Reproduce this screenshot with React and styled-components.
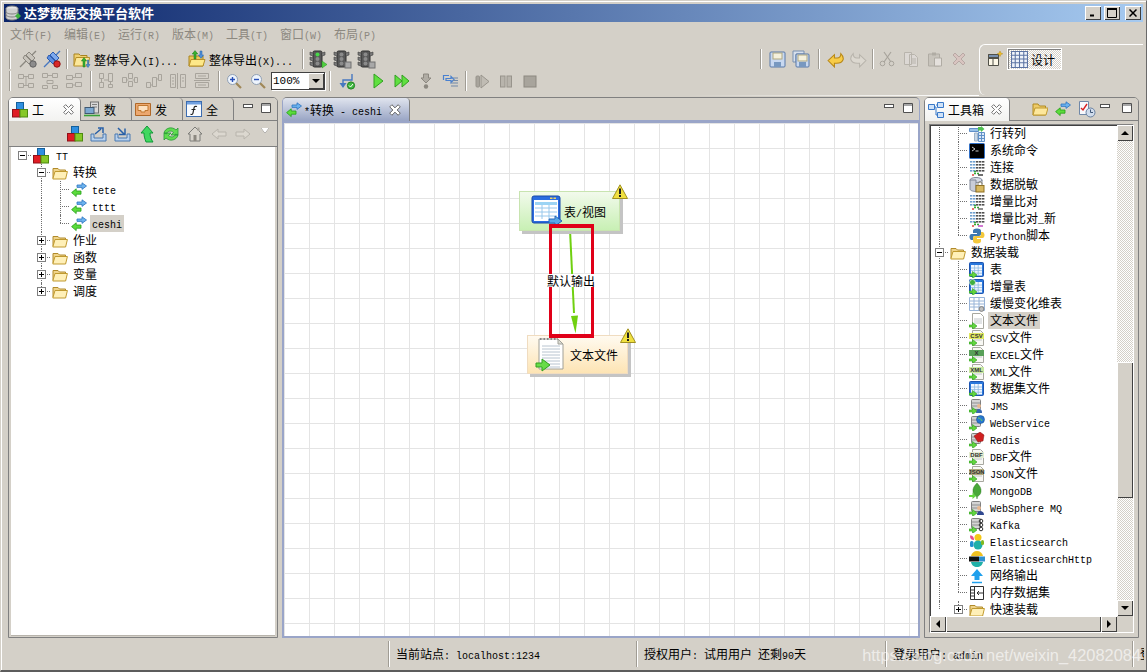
import React from 'react';
import styled, { createGlobalStyle } from 'styled-components';

const GlobalStyle = createGlobalStyle`
  html, body { margin: 0; padding: 0; background: #d4d0c8; }
  body { font-family: "Noto Sans CJK SC", "Liberation Sans", sans-serif; font-size: 12px; color: #000; }
`;

/* ---------- icons ---------- */
const Svg = ({ s = 16, w, h, vb = '0 0 16 16', children }) => (
  <svg width={w || s} height={h || s} viewBox={vb} style={{ display: 'block', flex: 'none' }}>{children}</svg>
);
const G1 = '#a8a49c';
const G2 = '#8c8880';
const GreenTag = () => <path d="M0 12h3.500V9.500L8 13l-4.500 3.500V14H0z" fill="#62d63e" stroke="#2c9a20" strokeWidth=".6" />;

const Cube = ({ s }) => (
  <Svg s={s}>
    <rect x="4.500" y="0.500" width="7" height="8" fill="#2f8fe0" stroke="#14609c" />
    <rect x="0.500" y="7.500" width="7.500" height="7.500" fill="#e01c24" stroke="#901018" />
    <rect x="8" y="7.500" width="7.500" height="7.500" fill="#86c828" stroke="#4c8a10" />
  </Svg>
);
const Folder = () => (
  <Svg>
    <path d="M1 13V3.500h5l1.500 1.500h6V13z" fill="#f0d48a" stroke="#b08a2a" />
    <path d="M.8 14 3 6.500h12.400L13.600 14z" fill="#fff0b8" stroke="#c09a30" />
  </Svg>
);
const Trans = ({ s }) => (
  <Svg s={s}>
    <path d="M6 3h5V.8L15.500 4 11 7.400V5.400H6z" fill="#6cb2ee" stroke="#2c74c0" strokeWidth=".8" />
    <path d="M10 9H5.200V6.800L.6 10.600 5.200 14.600v-2.400H10z" fill="#5cdc3c" stroke="#24a018" strokeWidth=".8" />
  </Svg>
);
const WindowTable = ({ s, children }) => (
  <Svg s={s}>
    <rect x=".5" y=".5" width="14" height="14" rx="1" fill="#2a78dc" stroke="#1c54b0" />
    <rect x="2" y="3" width="11" height="10.500" fill="#f4f8ff" />
    <path d="M2 6h11M2 8.600h11M2 11.200h11M5.600 3v10.500M9.200 3v10.500" stroke="#8cb8e0" strokeWidth=".8" />
    {children}
  </Svg>
);
const GridTable = () => (
  <Svg>
    <path d="M.5 1.500h15v13H.5z" fill="#fff" stroke="#98b4d8" />
    <path d="M.5 5h15M.5 8h15M.5 11h15M5 1.500v13M10 1.500v13" stroke="#98b4d8" />
    <circle cx="12.500" cy="13" r="2.400" fill="#c0c0c0" stroke="#808080" />
  </Svg>
);
const Doc = ({ label, fill = '#fff', s = 16, children }) => (
  <Svg s={s}>
    <path d="M3.500.5h8l3 3v12h-11z" fill={fill === '#fff' ? '#fff' : '#f8f8f4'} stroke="#a8a8a0" />
    <path d="M5 6h8M5 8h8M5 10h8" stroke="#c4c8cc" />
    {label && <rect x="0" y="3" width="15" height="6" fill={fill} />}
    {label && <text x="7.500" y="8.300" fontSize="6" fontWeight="bold" textAnchor="middle" fontFamily="Liberation Sans" fill="#303030">{label}</text>}
    {children}
  </Svg>
);
const Dots = ({ tint }) => (
  <Svg>
    {[0, 1, 2, 3].map((r) => [1, 4, 7, 10, 13].map((c, i) => (
      <rect key={`${r}${c}`} x={c} y={1 + r * 3} width="2.400" height="1.600" fill={i < 2 ? '#70a0d0' : '#505050'} />
    )))}
    <path d="M5 13.500h2M8 13.500h2M5 11.500h2" stroke="#38a838" strokeWidth="1.400" />
    <path d="M9 15h5" stroke={tint} strokeWidth="1.400" />
    <path d="M3 15h2" stroke="#e04040" strokeWidth="1.400" />
  </Svg>
);
const Server = ({ children }) => (
  <Svg>
    <rect x="2.500" y="1.500" width="9" height="10" rx="1" fill="#d4d4d4" stroke="#808080" />
    <path d="M3 5h8M3 8h8" stroke="#909090" />
    {children}
    <GreenTag />
  </Svg>
);

const Plug = ({ off }) => (
  <Svg s={20} vb="0 0 20 20">
    <path d="M2 18 8 12M12 8 18 2" stroke={off ? G2 : '#4878c0'} strokeWidth="1.400" />
    <path d="m7 6 7 7-3 2-6-6z" fill={off ? '#c8c4bc' : '#5c8ee0'} stroke={off ? G2 : '#2c5cb0'} />
    <path d="m11 3 6 6-3 3-6-6z" fill={off ? '#c8c4bc' : '#7ca8ec'} stroke={off ? G2 : '#2c5cb0'} />
    <circle cx="15" cy="15" r="3.200" fill={off ? '#8c8c8c' : '#d82828'} stroke={off ? '#606060' : '#901010'} />
  </Svg>
);
const FolderIO = () => (
  <Svg s={18} vb="0 0 18 18">
    <path d="M1 15V4h5l1.500 1.500H14V15z" fill="#f0d070" stroke="#a88420" />
    <path d="M.8 16 3 7.500h13.600L15 16z" fill="#fbe79a" stroke="#b89028" />
    <path d="M10 17V11H8.400l2.600-3.500 2.600 3.500H12v6z" fill="#38b030" stroke="#187818" strokeWidth=".5" />
    <path d="M14.400 10v4.500h-1.400l2 3 2-3h-1.400V10z" fill="#5090d8" stroke="#2060a8" strokeWidth=".5" />
  </Svg>
);
const FolderOut = () => (
  <Svg s={18} vb="0 0 18 18">
    <path d="M1 16V6h14v10z" fill="#eec858" stroke="#a88420" />
    <path d="M1 16 3 9.500h14L15 16z" fill="#fde888" stroke="#b89028" />
    <path d="M6 9V4H4.200L7 .6 9.800 4H8v5z" fill="#38b030" stroke="#187818" strokeWidth=".5" />
    <path d="M12 1v4h-1.600L13 8.400 15.600 5H14V1z" fill="#5090d8" stroke="#2060a8" strokeWidth=".5" />
  </Svg>
);
const Light = ({ on, tag }) => (
  <Svg s={20} vb="0 0 20 20">
    <rect x="5" y="2" width="9" height="16" rx="1.500" fill="#585858" stroke="#303030" />
    <path d="M5 4 2 3v3l3 1M5 9 2 8v3l3 1M5 14l-3-1v3l3 1M14 4l3-1v3l-3 1" fill="#787878" stroke="#404040" strokeWidth=".6" />
    <circle cx="9.500" cy="5.500" r="2" fill={on ? '#48d848' : '#8a8a8a'} />
    <circle cx="9.500" cy="10" r="2" fill="#8a8a8a" />
    <circle cx="9.500" cy="14.500" r="2" fill="#8a8a8a" />
    {tag === 'play' && <path d="m14 12 5 3.500-5 3.500z" fill="#50d040" stroke="#289020" strokeWidth=".5" />}
    {tag === 'gray' && <rect x="13" y="13" width="6" height="6" fill="#a8a8a8" stroke="#707070" />}
  </Svg>
);
const Layout = ({ d }) => (
  <Svg s={18} vb="0 0 18 18">
    <path d={d} fill="none" stroke={G1} strokeWidth="1" />
  </Svg>
);
const LAY = {
  a: 'M1.500 2.500h5v4h-5zM11.500 2.500h5v4h-5zM1.500 11.500h5v4h-5zM11.500 11.500h5v4h-5zM6.500 4.500h5M6.500 13.500h5M9 4.500v9',
  b: 'M1.500 1.500h5v4h-5zM11.500 1.500h5v4h-5zM6 8.500h6v3H6zM1.500 13.500h5v3h-5zM11.500 13.500h5v3h-5zM6.500 3.500h5',
  c: 'M1.500 3.500h6v4h-6zM10.500 1.500h6v4h-6zM1.500 11.500h6v4h-6zM10.500 10.500h6v4h-6zM7.500 5.500h3M7.500 13h3',
  d: 'M2.500 1.500h4v5h-4zM11.500 1.500h4v8h-4zM2.500 10.500h4v5h-4zM11.500 12.500h4v3h-4zM4.500 6.500v4M13.500 9.500v3M7 8h4',
  e: 'M1.500 5.500h4v5h-4zM7.500 1.500h4v5h-4zM7.500 9.500h4v5h-4zM13.500 5.500h3v5h-3zM5.500 8h2M11.500 8h2',
  f: 'M1.500 10.500h4v5h-4zM7.500 5.500h4v9h-4zM13.500 2.500h3v6h-3zM5.500 13h2M11.500 7h2',
  g: 'M1.500 2.500h5v13h-5zM11.500 2.500h5v13h-5zM8.500 1v16M3 6h2M3 9h2M3 12h2M13 6h2M13 9h2',
  h: 'M2.500 1.500h13v5h-13zM2.500 10.500h13v5h-13zM1 8.500h16M5 4h8M5 13h8',
};
const Zoom = ({ plus }) => (
  <Svg>
    <path d="m10 10 5 5" stroke="#a08858" strokeWidth="2.200" />
    <circle cx="6.500" cy="6.500" r="5" fill="#eef4fc" stroke="#90a0b4" />
    <path d={plus ? 'M4 6.500h5M6.500 4v5' : 'M4 6.500h5'} stroke="#2850b8" strokeWidth="1.400" />
  </Svg>
);
const Route = () => (
  <Svg s={18} vb="0 0 18 18">
    <path d="M5 15V8h9V2" fill="none" stroke="#4878c0" strokeWidth="1.400" />
    <path d="M1.500 11h7L5 16z" fill="#4878c0" />
    <circle cx="13" cy="13.500" r="3.600" fill="#40b840" stroke="#208020" />
    <path d="m11 13.500 1.500 1.500 2.500-3" fill="none" stroke="#fff" />
  </Svg>
);
const Play = ({ fast }) => (
  <Svg>
    {fast ? (
      <path d="m1 2 7 6-7 6zM8 2l7 6-7 6z" fill="#60e040" stroke="#30a020" />
    ) : (
      <path d="m4 1 9 7-9 7z" fill="#60e040" stroke="#30a020" />
    )}
  </Svg>
);
const Step = () => (
  <Svg>
    <path d="M5.500 1h5v4H13L8 10 3 5h2.500z" fill="#b0aca4" stroke={G2} />
    <circle cx="8" cy="13.500" r="2.200" fill="#8c8880" />
  </Svg>
);
const StepList = () => (
  <Svg s={18} vb="0 0 18 18">
    <path d="M8 3.500H2.500V8M5 6.500h5V4.500l3 3-3 3V8.500H5z" fill="none" stroke="#4880d0" strokeWidth="1.200" />
    <path d="M10 11h7M10 14h7M12 6h5M12 8.500h5" stroke="#7088a8" />
  </Svg>
);
const DebugGray = ({ k }) => (
  <Svg>
    {k === 'resume' && <><rect x="2" y="3" width="3.500" height="11" rx="1" fill="#a8a49c" stroke="#98948c" /><path d="m7 2 8 6.500L7 15z" fill="#c0bcb4" stroke="#98948c" /></>}
    {k === 'pause' && <><rect x="2.500" y="3" width="4.500" height="11" fill="#b8b4ac" stroke="#98948c" /><rect x="9" y="3" width="4.500" height="11" fill="#b8b4ac" stroke="#98948c" /></>}
    {k === 'stop' && <rect x="2" y="3" width="12" height="11" fill="#a8a49c" stroke="#8c8880" />}
  </Svg>
);
const Save = ({ all }) => (
  <Svg s={18} vb="0 0 18 18">
    {all && <path d="M1 1h11v3H4v8H1z" fill="#d8e0ec" stroke="#7890b0" />}
    <rect x={all ? 4 : 2} y={all ? 4 : 2} width={all ? 13 : 15} height={all ? 13 : 15} rx="1" fill="#c8d8f0" stroke="#5878a8" />
    <rect x={all ? 6 : 5} y={all ? 5 : 3} width="9" height="6" fill="#f4f0dc" stroke="#b0a880" />
    <rect x={all ? 7 : 6} y="12" width="7" height="5" fill="#7898c0" />
  </Svg>
);
const Undo = ({ off, flip }) => (
  <Svg s={17} vb="0 0 16 16">
    <path
      transform={flip ? 'translate(16 0) scale(-1 1)' : undefined}
      d="M1 9 7 3.500v3h2.500c2.500 0 3.500-2 3.500-4 2 2 3 3.500 2 6s-3 3-6 3H7v3.500z"
      fill={off ? '#dcd8d0' : '#f8cc48'}
      stroke={off ? '#b8b4ac' : '#b88818'}
    />
  </Svg>
);
const Cut = () => (
  <Svg><path d="M12 1 5 11M5 1l7 10" stroke={G1} strokeWidth="1.200" /><circle cx="3.500" cy="12.500" r="2.300" fill="none" stroke={G1} /><circle cx="12.500" cy="12.500" r="2.300" fill="none" stroke={G1} /></Svg>
);
const Copy = () => (
  <Svg><path d="M1.500 1.500h7v12h-7zM6.500 3.500h5l3 3v9h-8z" fill="#dcd8d4" stroke="#b8b4ac" /><path d="M8 8h5M8 10h5M8 12h5" stroke="#b8b4ac" /></Svg>
);
const Paste = () => (
  <Svg><path d="M1.500 3h11v12h-11z" fill="#c8c4bc" stroke="#b0aca4" /><path d="M5 1.500h4v3H5z" fill="#b0aca4" /><path d="M7.500 7h7v8h-7z" fill="#e4e0dc" stroke="#b0aca4" /></Svg>
);
const Del = () => (
  <Svg><path d="m2 4 2-2 4 4 4-4 2 2-4 4 4 4-2 2-4-4-4 4-2-2 4-4z" fill="#d8c4c0" stroke="#b8a8a4" /></Svg>
);
const NewPersp = () => (
  <Svg><path d="M1.500 3.500h10v11h-10zM1.500 7.500h10M6 7.500v7" fill="#fdf8e8" stroke="#505048" /><path d="M1.500 3.500h10v3h-10z" fill="#7890b0" stroke="#505048" /><path d="m13 0 .8 2 2 .8-2 .8-.8 2-.8-2-2-.8 2-.8z" fill="#f0c020" stroke="#b08010" strokeWidth=".4" /></Svg>
);
const DesignGrid = () => (
  <Svg s={17} vb="0 0 16 16"><path d="M.5.5h15v15H.5z" fill="#f0f4fa" stroke="#5c74a4" /><path d="M.5 4h15M.5 7.500h15M.5 11h15M4 .5v15M8 .5v15M12 .5v15" stroke="#5c74a4" /></Svg>
);
const DbServer = () => (
  <Svg><rect x="6.500" y="1" width="8" height="11" fill="#d8d8d8" stroke="#707070" /><path d="M8 3.500h5M8 6h5" stroke="#808080" /><rect x="1" y="6.500" width="9" height="6" fill="#7ca8d0" stroke="#405870" /><path d="M0 14.500h16" stroke="#38a038" strokeWidth="1.600" /></Svg>
);
const Inbox = () => (
  <Svg><path d="M.5 2.500h15v12H.5z" fill="#eca870" stroke="#b06828" /><path d="M3 4.500h10v5h-3v1.500H6V9.500H3z" fill="#fce0c0" stroke="#c07830" /></Svg>
);
const Fx = () => (
  <Svg><rect x=".5" y=".5" width="15" height="15" fill="#f8fbff" stroke="#3c6cb0" /><rect x="1" y="1" width="14" height="2.500" fill="#70a0e0" /><path d="M11 5.500c-2-.6-2.800.2-3 1.500l-1 5c-.2 1.200-1 1.800-2.500 1.300M5.500 8.500h4" fill="none" stroke="#202020" strokeWidth="1.200" /></Svg>
);
const Toolbox = () => (
  <Svg><path d="M.5 2.500h6v5h-6zM9.500.5h6v5h-6zM9.500 10.500h6v5h-6z" fill="#cfe2f8" stroke="#3878c8" /><path d="M6.500 5H8v8h1.500M8 3h1.500" fill="none" stroke="#3878c8" /></Svg>
);
const XClose = ({ s = 11 }) => (
  <Svg s={s} vb="0 0 10 10">
    <path d="M.6 2.400 2.400.6 5 3.200 7.600.6 9.400 2.400 6.800 5 9.400 7.600 7.600 9.400 5 6.800 2.400 9.400.6 7.600 3.200 5z" fill="#fff" stroke="#606060" strokeWidth=".8" />
  </Svg>
);
const MinBtn = () => <Svg w={11} h={10} vb="0 0 11 10"><rect x=".5" y="1.500" width="9" height="3" fill="#fff" stroke="#505050" /></Svg>;
const MaxBtn = () => <Svg w={11} h={10} vb="0 0 11 10"><path d="M.5.5h9v9h-9z" fill="#fff" stroke="#505050" /><path d="M.5 2h9" stroke="#505050" /></Svg>;
const TaskOut = () => (
  <Svg s={18} vb="0 0 18 18"><path d="M1 9v7h15V9h-3v4H4V9z" fill="#b8d0ec" stroke="#4878b0" /><path d="m5 9 6-5M8 3h5v5" fill="none" stroke="#2860a8" strokeWidth="1.500" /></Svg>
);
const TaskIn = () => (
  <Svg s={18} vb="0 0 18 18"><path d="M1 9v7h15V9h-3v4H4V9z" fill="#b8d0ec" stroke="#4878b0" /><path d="m4 3 6 6M5 9.500h6v-6" fill="none" stroke="#2860a8" strokeWidth="1.500" /></Svg>
);
const UpArrow = () => (
  <Svg s={18} vb="0 0 18 18"><path d="M9 1 15 8h-3c0 4 1 6 3 9H8C6.500 13 6 11 6 8H3z" fill="#40d860" stroke="#109838" /></Svg>
);
const Refresh = () => (
  <Svg s={18} vb="0 0 18 18"><path d="M2 8c1-5 8-7 12-3l2-2v7H9l2.500-2.500C9 5 5 6 4.500 9zM16 10c-1 5-8 7-12 3l-2 2V8h7l-2.500 2.500C9 13 13 12 13.500 9z" fill="#60dc50" stroke="#289838" strokeWidth=".8" /></Svg>
);
const Home = () => (
  <Svg s={18} vb="0 0 18 18"><path d="M2 9 9 2l7 7h-2v7H4V9z" fill="#d8d4cc" stroke="#7c7c78" /><rect x="7.500" y="10" width="3" height="6" fill="#8c8880" /><rect x="11.500" y="2.500" width="2" height="3.500" fill="#a8a49c" /></Svg>
);
const ArrowGray = ({ right }) => (
  <Svg>
    <path transform={right ? 'translate(16 0) scale(-1 1)' : undefined} d="m1 8 6-5v3h8v4H7v3z" fill="#dcd8d0" stroke="#b8b4ac" />
  </Svg>
);
const OpenFolder = () => (
  <Svg><path d="M1 14V3h5l1.500 2h6v9z" fill="#eecb68" stroke="#b08a20" /><path d="M1 14 3 7h13l-2 7z" fill="#fde79c" stroke="#c09a30" /></Svg>
);
const Report = () => (
  <Svg s={18} vb="0 0 18 18"><path d="M1.500 1.500h9v13h-9z" fill="#f8f8fc" stroke="#7088a8" /><path d="m3 8 2 2 4-6" fill="none" stroke="#d82020" strokeWidth="1.400" /><circle cx="12.500" cy="12.500" r="4.500" fill="#d0dcec" stroke="#6880a0" /><path d="M12.500 9.500v3h2.500" fill="none" stroke="#405878" /></Svg>
);
const Python = () => (
  <Svg><path d="M8 .5c-3 0-4 1-4 2.500V5h4v1H2.500C1 6 .5 7.500.5 9s.8 3 2 3H4V9.500C4 8.500 5 8 6 8h4c1 0 2-1 2-2V3c0-1.500-1-2.500-4-2.500z" fill="#3c78b0" /><path d="M8 15.500c3 0 4-1 4-2.500v-2H8v-1h5.500c1.500 0 2-1.500 2-3s-.8-3-2-3H12v2.500C12 7.500 11 8 10 8H6c-1 0-2 1-2 2v3c0 1.500 1 2.500 4 2.500z" fill="#f4c83c" /></Svg>
);
const Terminal = () => (
  <Svg><rect x=".5" y=".5" width="15" height="15" rx="1" fill="#000" stroke="#3070c8" /><path d="m3 4 3 2-3 2M6.500 8h3" fill="none" stroke="#e0e0e0" strokeWidth=".9" /></Svg>
);
const RowCol = () => (
  <Svg><path d="M.5 2.500h9v3h-9z" fill="#98c0e8" stroke="#6090c8" /><path d="M9.500 6.500h6v9h-6zM9.500 9.500h6M9.500 12.500h6M12.500 6.500v9" fill="#d8e8f8" stroke="#6090c8" /><path d="M5.500 7h3v8h-3z" fill="#c8d8e8" stroke="#a0b4c8" /><path d="M9 1h3V0l3.500 3L12 6V4.500H9z" fill="#50c050" /></Svg>
);
const Mask = () => (
  <Svg><ellipse cx="7" cy="3" rx="6" ry="2.500" fill="#d8dce8" stroke="#808898" /><path d="M1 3v9c0 1.400 2.700 2.500 6 2.500V3z" fill="#c8ccd8" stroke="#808898" /><path d="M13 3v4" stroke="#808898" /><rect x="7" y="8.500" width="8" height="6.500" fill="#d8b860" stroke="#907020" /><path d="M9 8.500V6.500c0-2 4-2 4 0v2" fill="none" stroke="#807860" /></Svg>
);
const MemoryIco = () => (
  <Svg><path d="M1.500 1.500h13v13h-13z" fill="#fff" stroke="#303030" /><path d="M5.500 1.500v13M1.500 5h4M1.500 8h4M1.500 11h4M14 8H8M10 6 8 8l2 2" fill="none" stroke="#303030" /></Svg>
);
const NetOut = () => <Svg><path d="M8 1 14 8h-3.500v4h-5V8H2z" fill="#20a0ec" /><path d="M3 14.500h10" stroke="#20a0ec" strokeWidth="1.500" /></Svg>;
const Mongo = () => <Svg><path d="M8 0c3 3 4.500 5.500 4 9-.4 2.500-2.500 4-3.500 4.500L8 16l-.5-2.500c-1-.5-3.100-2-3.500-4.500C3.500 5.500 5 3 8 0z" fill="#48a838" stroke="#2c7020" strokeWidth=".4" /><path d="M0 12h3.500V9.500L7 13l-3.500 3v-2H0z" fill="#62d63e" /></Svg>;
const Elastic = () => (
  <Svg><circle cx="9" cy="3.500" r="3.500" fill="#f4c818" /><path d="M1 1.500c3 0 4 2 4 4.500-3 0-4-1.500-4-4.500z" fill="#e84c8c" /><circle cx="9" cy="11" r="4.500" fill="#20b0a8" /><rect x="1" y="7" width="3.500" height="6" rx="1.500" fill="#2090d0" /><rect x="12" y="6" width="3" height="5" rx="1.500" fill="#80b820" /></Svg>
);
const ElasticH = () => (
  <Svg><path d="M2 5c.5-3 3-5 6-5s5.500 2 6 5z" fill="#f0c020" /><path d="M2 11c.5 3 3 5 6 5s5.500-2 6-5z" fill="#20b0a8" /><rect y="5.500" width="10" height="5" fill="#101010" /><rect x="10" y="5.500" width="6" height="5" fill="#3090d0" /></Svg>
);
const Warn = () => (
  <Svg><path d="M8 .8 15.500 14.500H.5z" fill="#f0e040" stroke="#a09020" /><rect x="7" y="4.500" width="2" height="5.500" fill="#202020" /><rect x="7" y="11" width="2" height="2" fill="#202020" /></Svg>
);
const BigTable = () => (
  <Svg s={32} vb="0 0 32 32">
    <rect x="1" y="1" width="28" height="27" rx="2" fill="#2a6ce0" stroke="#1848a8" />
    <rect x="3" y="5" width="24" height="21" fill="#fff" />
    <path d="M19 2.500h2.500v1.500H19zM22.500 2.500H25v1.500h-2.500z" fill="#f0d060" />
    <rect x="4" y="7" width="22" height="3" fill="#9cd4f4" />
    <path d="M4 13h22M4 17h22M4 21h22M11 10v14M18 10v14" stroke="#98c8ec" />
    <path d="M18 24h6v-3l7 5-7 5v-3h-6z" fill="#58a8e8" stroke="#2868b8" />
  </Svg>
);
const BigDoc = () => (
  <Svg w={30} h={36} vb="0 0 30 36">
    <path d="M4 2h19l5 5v25H4z" fill="#fff" stroke="#a0a098" />
    <path d="M23 2v5h5z" fill="#dcdcd4" stroke="#a0a098" />
    <path d="M5 2h18" stroke="#888" strokeDasharray="1.500 2" strokeWidth="2" />
    <path d="M7 9h18M7 12h18M7 15h18M7 18h18M7 21h18M7 24h18M7 27h18M7 30h18" stroke="#b8c4d0" />
    <path d="M0 29h6v-4l8 6-8 6v-4H0z" transform="translate(1 -3)" fill="#68dc48" stroke="#30a020" />
  </Svg>
);

/* ---------- shell ---------- */
const Win = styled.div`
  box-sizing: border-box;
  width: 1147px;
  height: 672px;
  padding: 3px 3px 0;
  overflow: hidden;
  position: relative;
  display: flex;
  flex-direction: column;
  background: #d4d0c8;
  border-top: 1px solid #d4d0c8;
  border-left: 1px solid #d4d0c8;
  border-right: 1px solid #6a6a6a;
  border-bottom: 2px solid #5c5c5c;
  box-shadow: inset 1px 1px 0 #fff;
`;
const TitleBar = styled.div`
  height: 18px;
  flex: none;
  display: flex;
  align-items: center;
  gap: 3px;
  padding: 0 2px 0 1px;
  background: linear-gradient(to right, #0a246a, #a6caf0);
  color: #fff;
  font-weight: bold;
  font-size: 13px;
`;
const TitleText = styled.span`
  flex: 1;
  line-height: 18px;
`;
const CapBtn = styled.button`
  box-sizing: border-box;
  width: 16px;
  height: 14px;
  padding: 0;
  margin-left: ${(p) => p.$gap || 0}px;
  border: 0;
  background: #d4d0c8;
  box-shadow: inset 1px 1px 0 #fff, inset -1px -1px 0 #404040;
  display: flex;
  align-items: center;
  justify-content: center;
`;
const MenuBar = styled.div`
  height: 22px;
  flex: none;
  display: flex;
  align-items: center;
  padding-left: 6px;
`;
const MenuItem = styled.span`
  width: 54px;
  color: #8c8880;
  white-space: pre;
`;
const ToolZone = styled.div`
  height: 52px;
  flex: none;
  display: flex;
`;
const ToolRows = styled.div`
  box-sizing: border-box;
  width: 975px;
  padding-top: 4px;
  background: linear-gradient(to right, transparent 70%, #fff) bottom / 100% 1px no-repeat;
`;
const ToolRow = styled.div`
  height: 22px;
  display: flex;
  align-items: center;
  padding-left: 5px;
`;
const ToolGroupEnd = styled.div`
  display: flex;
  align-items: center;
  margin-left: auto;
  padding-right: 8px;
`;
const Sep = styled.span`
  width: 1px;
  height: 20px;
  flex: none;
  margin-left: ${(p) => p.$ml || 0}px;
  background: #fff;
  border-left: 1px solid #a09c94;
`;
const Slot = styled.span`
  width: ${(p) => p.$w || 24}px;
  margin-left: ${(p) => p.$ml || 0}px;
  flex: none;
  display: flex;
  justify-content: center;
`;
const TextBtn = styled.span`
  display: flex;
  align-items: center;
  gap: ${(p) => p.$gap || 3}px;
  margin-left: ${(p) => p.$ml}px;
  white-space: pre;
`;
const Combo = styled.span`
  box-sizing: border-box;
  width: 54px;
  height: 18px;
  margin-left: 1px;
  flex: none;
  display: flex;
  background: #fff;
  border: 1px solid #404040;
  box-shadow: 1px 1px 0 #fff;
  line-height: 16px;
  padding-left: 1px;
`;
const ComboText = styled.span`
  flex: 1;
  font-family: "Liberation Mono", monospace;
  font-size: 11px;
`;
const ComboBtn = styled.span`
  width: 16px;
  background: #d4d0c8;
  box-shadow: inset 1px 1px 0 #fff, inset -1px -1px 0 #404040;
  display: flex;
  align-items: center;
  justify-content: center;
  &::after {
    content: "";
    border: 4px solid transparent;
    border-top: 4px solid #000;
    border-bottom: 0;
  }
`;
const Switcher = styled.div`
  flex: 1;
  display: flex;
  align-items: flex-start;
  gap: 4px;
  padding: 3px 0 0 7px;
  margin-bottom: 1px;
  border-top: 1px solid #fff;
  border-left: 1px solid #fff;
  border-top-left-radius: 6px;
  border-bottom-left-radius: 6px;
`;
const SwitchIcon = styled.span`
  padding-top: 3px;
`;
const DesignBtn = styled.span`
  box-sizing: border-box;
  width: 55px;
  height: 22px;
  display: flex;
  align-items: center;
  gap: 3px;
  padding-left: 3px;
  border: 1px solid #fff;
  background: repeating-conic-gradient(#fff 0 25%, #d4d0c8 0 50%) 0 0 / 2px 2px;
  box-shadow: inset 1px 1px 0 #808080;
`;

/* ---------- panels ---------- */
const Panels = styled.div`
  display: flex;
  flex: none;
  height: 541px;
  margin-top: 1px;
  padding-left: 4px;
  gap: 4px;
`;
const Panel = styled.section`
  box-sizing: border-box;
  width: ${(p) => p.$w}px;
  flex: none;
  display: flex;
  flex-direction: column;
  border: 1px solid ${(p) => (p.$blue ? '#9aa5c8' : '#808080')};
  border-top-color: #808080;
  border-radius: 5px 5px 0 0;
  background: ${(p) => (p.$blue ? '#9aa5c8' : '#d4d0c8')};
`;
const TabBar = styled.div`
  height: 22px;
  flex: none;
  display: flex;
  align-items: stretch;
  background: #d4d0c8;
  border-bottom: 1px solid ${(p) => (p.$blue ? '#9aa5c8' : '#808080')};
  border-radius: 4px 4px 0 0;
`;
const Tab = styled.div`
  box-sizing: border-box;
  width: ${(p) => p.$w}px;
  flex: none;
  display: flex;
  align-items: center;
  gap: ${(p) => p.$gap || 4}px;
  padding-left: 3px;
  margin-bottom: ${(p) => (p.$on ? -1 : 0)}px;
  border-right: 1px solid #808080;
  border-radius: 4px 4px 0 0;
  white-space: pre;
  font-size: ${(p) => p.$fs || 12}px;
  background: ${(p) => (p.$on ? 'linear-gradient(#fff, #f2f2f0)' : 'transparent')};
`;
const BlueTab = styled(Tab)`
  background: linear-gradient(#e0e4ee, #98a4c4);
  margin-bottom: -1px;
`;
const TabClose = styled.span`
  margin-left: auto;
  margin-right: ${(p) => p.$mr || 6}px;
`;
const TabTools = styled.div`
  margin-left: auto;
  display: flex;
  align-items: flex-start;
  padding: 5px ${(p) => p.$pr || 5}px 0 0;
  gap: ${(p) => p.$gap || 7}px;
`;
const SideTools = styled.span`
  display: flex;
  gap: 7px;
  align-items: center;
  margin-right: -7px;
  margin-top: -3px;
`;
const PanelTools = styled.div`
  height: 25px;
  flex: none;
  display: flex;
  align-items: center;
  justify-content: flex-end;
  padding-right: 2px;
  border-bottom: 1px solid #808080;
`;
const ToolSlot = styled.span`
  width: 24px;
  display: flex;
  justify-content: center;
`;
const MenuTri = styled.span`
  width: 20px;
  align-self: flex-start;
  margin-top: 7px;
  display: flex;
  justify-content: center;
  &::after {
    content: "";
    width: 0;
    height: 0;
    border: 4px solid transparent;
    border-top: 5px solid #fff;
    border-bottom: 0;
    filter: drop-shadow(0 0 .5px #000);
  }
`;
const TreeBody = styled.div`
  flex: 1;
  min-height: 0;
  margin: 0 2px 2px;
  padding: 0 0 0 1px;
  background: #fff;
  overflow: hidden;
  box-shadow: 0 1px 0 #b8b4ac;
`;
const TreeInner = styled.div`
  margin-top: ${(p) => p.$mt || 0}px;
  margin-left: ${(p) => p.$ml || 0}px;
`;
const TreeRow = styled.div`
  display: flex;
  align-items: center;
  height: 17px;
  white-space: pre;
`;
const Indent = styled.span`
  position: relative;
  width: 19px;
  height: 17px;
  flex: none;
  &::before {
    content: "";
    position: absolute;
    left: 10px;
    top: 0;
    display: ${(p) => (p.$v ? 'block' : 'none')};
    height: ${(p) => (p.$v === 'half' ? 8 : 17)}px;
    border-left: 1px dotted #707070;
  }
  &::after {
    content: "";
    position: absolute;
    left: 10px;
    top: 8px;
    width: 9px;
    display: ${(p) => (p.$h ? 'block' : 'none')};
    border-top: 1px dotted #707070;
  }
`;
const Expander = styled.span`
  position: absolute;
  z-index: 1;
  left: 6px;
  top: 4px;
  box-sizing: border-box;
  width: 9px;
  height: 9px;
  border: 1px solid #808080;
  background: #fff;
  &::before {
    content: "";
    position: absolute;
    left: 1px;
    top: 3px;
    width: 5px;
    height: 1px;
    background: #000;
  }
  &::after {
    content: "";
    position: absolute;
    left: 3px;
    top: 1px;
    width: 1px;
    height: 5px;
    background: #000;
    display: ${(p) => (p.$open ? 'none' : 'block')};
  }
`;
const NodeIcon = styled.span`
  flex: none;
  margin-left: 2px;
`;
const NodeLabel = styled.span`
  margin-left: ${(p) => p.$ml || 3}px;
  padding: 0 2px;
  line-height: 16px;
  height: 17px;
  background: ${(p) => (p.$sel ? '#d4d0c8' : 'transparent')};
`;
const Latin = styled.span`
  font-family: "Liberation Mono", monospace;
  font-size: 10px;
`;

/* ---------- canvas ---------- */
const Canvas = styled.div`
  position: relative;
  flex: 1;
  margin: 2px 1px 1px 1px;
  overflow: hidden;
  background-color: #fff;
  background-image: linear-gradient(#e4e4e4 1px, transparent 1px), linear-gradient(to right, #e4e4e4 1px, transparent 1px);
  background-size: 25px 25px;
  background-position: 0 0;
`;
const FlowNode = styled.div`
  position: absolute;
  left: ${(p) => p.$x}px;
  top: ${(p) => p.$y}px;
  box-sizing: border-box;
  width: 101px;
  height: ${(p) => p.$h}px;
  display: flex;
  align-items: center;
  gap: ${(p) => p.$gap}px;
  padding-left: ${(p) => p.$pad}px;
  border: 1px solid ${(p) => (p.$kind === 'in' ? '#c8e4b0' : '#f0dcc0')};
  background: ${(p) => (p.$kind === 'in' ? 'linear-gradient(#f2faec, #c8f0b4)' : 'linear-gradient(#fffaf0, #fde4b4)')};
  box-shadow: 3px 3px 0 #c4c4c4;
`;
const WarnBadge = styled.span`
  position: absolute;
  right: -9px;
  top: -8px;
`;
const EdgeSvg = styled.svg`
  position: absolute;
  left: 0;
  top: 0;
`;
const EdgeLabel = styled.span`
  position: absolute;
  left: 263px;
  top: 151px;
  height: 13px;
  line-height: 13px;
  background: #fff;
  white-space: pre;
`;
const Marker = styled.div`
  position: absolute;
  left: 265px;
  top: 101px;
  box-sizing: border-box;
  width: 45px;
  height: 114px;
  border-style: solid;
  border-color: #e00018;
  border-width: 4px 3px;
`;

/* ---------- scrollbars ---------- */
const ScrollFrame = styled.div`
  flex: 1;
  min-height: 0;
  margin: 3px 4px 4px;
  display: grid;
  grid-template-columns: 1fr 16px;
  grid-template-rows: 1fr 16px;
  border: 1px solid #808080;
  border-right-color: #fff;
  border-bottom-color: #fff;
  box-shadow: inset 1px 1px 0 #404040;
  overflow: hidden;
`;
const RightTree = styled.div`
  background: #fff;
  overflow: hidden;
  padding-left: 1px;
  margin: 1px 0 0 1px;
`;
const VTrack = styled.div`
  display: flex;
  flex-direction: column;
  background: repeating-conic-gradient(#fff 0 25%, #d4d0c8 0 50%) 0 0 / 2px 2px;
`;
const HTrack = styled.div`
  display: flex;
  background: #d4d0c8;
`;
const Corner = styled.div`
  background: #d4d0c8;
`;
const Thumb = styled.div`
  box-sizing: border-box;
  flex: ${(p) => (p.$grow ? 1 : 'none')};
  height: ${(p) => (p.$h ? `${p.$h}px` : 'auto')};
  margin-top: ${(p) => p.$mt || 0}px;
  background: #d4d0c8;
  box-shadow: inset 1px 1px 0 #fff, inset -1px -1px 0 #404040;
`;
const ArrowBtn = styled.div`
  box-sizing: border-box;
  flex: none;
  width: 16px;
  height: 16px;
  margin-top: ${(p) => (p.$push ? 'auto' : 0)};
  background: #d4d0c8;
  box-shadow: inset 1px 1px 0 #fff, inset -1px -1px 0 #404040;
  display: flex;
  align-items: center;
  justify-content: center;
  &::after {
    content: "";
    width: 0;
    height: 0;
    border: 4px solid transparent;
    ${(p) => `border-${{ up: 'bottom', down: 'top', left: 'right', right: 'left' }[p.$dir]}-color: #000;`}
    ${(p) => `border-${p.$dir === 'up' ? 'top' : p.$dir === 'down' ? 'bottom' : p.$dir}-width: 0;`}
  }
`;

/* ---------- status ---------- */
const StatusBar = styled.footer`
  flex: 1;
  display: flex;
  align-items: center;
  padding-left: 384px;
`;
const StatusCell = styled.div`
  box-sizing: border-box;
  width: ${(p) => p.$w}px;
  flex: none;
  height: 26px;
  line-height: 26px;
  padding-left: 7px;
  white-space: pre;
  overflow: hidden;
  border-left: 1px solid #a09c94;
  box-shadow: inset 1px 0 0 #fff;
`;
const Watermark = styled.div`
  position: absolute;
  right: 5px;
  bottom: 6px;
  font-family: "Liberation Sans", sans-serif;
  font-size: 16.400px;
  line-height: 18px;
  color: rgba(255, 255, 255, 0.62);
  white-space: pre;
`;

/* ---------- data ---------- */
const T = ({ children }) =>
  String(children)
    .split(/([\x20-\x7e]+)/)
    .map((p, i) => (/[\x20-\x7e]/.test(p) ? <Latin key={i}>{p}</Latin> : p));

const MENUS = ['文件(F)', '编辑(E)', '运行(R)', '版本(M)', '工具(T)', '窗口(W)', '布局(P)'];

const leftTree = [
  { ind: [{ exp: 'open', h: 1 }], icon: <Cube />, label: 'TT', ml: 5 },
  { ind: [{}, { v: 'full', h: 1, exp: 'open' }], icon: <Folder />, label: '转换' },
  { ind: [{}, { v: 'full' }, { v: 'full', h: 1 }], icon: <Trans />, label: 'tete' },
  { ind: [{}, { v: 'full' }, { v: 'full', h: 1 }], icon: <Trans />, label: 'tttt' },
  { ind: [{}, { v: 'full' }, { v: 'half', h: 1 }], icon: <Trans />, label: 'ceshi', sel: true },
  { ind: [{}, { v: 'full', h: 1, exp: 'closed' }], icon: <Folder />, label: '作业' },
  { ind: [{}, { v: 'full', h: 1, exp: 'closed' }], icon: <Folder />, label: '函数' },
  { ind: [{}, { v: 'full', h: 1, exp: 'closed' }], icon: <Folder />, label: '变量' },
  { ind: [{}, { v: 'half', h: 1, exp: 'closed' }], icon: <Folder />, label: '调度' },
];

const leaf = (icon, label, sel, last) => ({
  ind: [{ v: 'full' }, { v: last ? 'half' : 'full', h: 1 }],
  icon,
  label,
  sel,
});
const rightTree = [
  leaf(<RowCol />, '行转列'),
  leaf(<Terminal />, '系统命令'),
  leaf(<Dots tint="#303030" />, '连接'),
  leaf(<Mask />, '数据脱敏'),
  leaf(<Dots tint="#606060" />, '增量比对'),
  leaf(<Dots tint="#c040c0" />, '增量比对_新'),
  leaf(<Python />, 'Python脚本', false, true),
  { ind: [{ v: 'full', h: 1, exp: 'open' }], icon: <Folder />, label: '数据装载' },
  leaf(<WindowTable><GreenTag /></WindowTable>, '表'),
  leaf(<WindowTable><circle cx="3.500" cy="3.500" r="3" fill="#40b040" stroke="#fff" strokeWidth=".6" /><GreenTag /></WindowTable>, '增量表'),
  leaf(<GridTable />, '缓慢变化维表'),
  leaf(<Doc><GreenTag /></Doc>, '文本文件', true),
  leaf(<Doc label="CSV" fill="#e0e860"><GreenTag /></Doc>, 'CSV文件'),
  leaf(<Doc label="X" fill="#58a058"><GreenTag /></Doc>, 'EXCEL文件'),
  leaf(<Doc label="XML" fill="#c8e8a0"><GreenTag /></Doc>, 'XML文件'),
  leaf(<WindowTable><GreenTag /></WindowTable>, '数据集文件'),
  leaf(<Server><circle cx="10" cy="8" r="2" fill="#e8b890" /><path d="M7 15c0-3 1-4 3-4s3 1 3 4z" fill="#3868b0" /></Server>, 'JMS'),
  leaf(<Server><circle cx="11.500" cy="4.500" r="4" fill="#2878d0" stroke="#104888" strokeWidth=".5" /><path d="M9 3c2 0 3 1 4 3" stroke="#70d050" fill="none" /></Server>, 'WebService'),
  leaf(<Server><path d="m5 4 6-4 4 3-1 6-5 1z" fill="#d02020" stroke="#801010" strokeWidth=".5" /></Server>, 'Redis'),
  leaf(<Doc label="DBF" fill="#e4ecd0"><GreenTag /></Doc>, 'DBF文件'),
  leaf(<Doc label="JSON" fill="#b0aa80"><GreenTag /></Doc>, 'JSON文件'),
  leaf(<Mongo />, 'MongoDB'),
  leaf(<Server><circle cx="10" cy="8" r="2" fill="#e8b890" /><path d="M8 15c0-3 1-4 3-4s4 1 4 4z" fill="#304890" /></Server>, 'WebSphere MQ'),
  leaf(<Server><circle cx="12" cy="4" r="1.800" fill="none" stroke="#303030" /><circle cx="12" cy="8" r="1.800" fill="none" stroke="#303030" /><circle cx="12" cy="12" r="1.800" fill="none" stroke="#303030" /></Server>, 'Kafka'),
  leaf(<Elastic />, 'Elasticsearch'),
  leaf(<ElasticH />, 'ElasticsearchHttp'),
  leaf(<NetOut />, '网络输出'),
  leaf(<MemoryIco />, '内存数据集', false, true),
  { ind: [{ v: 'half' }, { v: 'half', h: 1, exp: 'closed' }], icon: <Folder />, label: '快速装载' },
];

const Tree = ({ rows }) =>
  rows.map((r) => (
    <TreeRow key={r.label}>
      {r.ind.map((n, i) => (
        <Indent key={i} $v={n.v} $h={n.h}>
          {n.exp && <Expander $open={n.exp === 'open'} />}
        </Indent>
      ))}
      <NodeIcon>{r.icon}</NodeIcon>
      <NodeLabel $sel={r.sel} $ml={r.ml}>
        <T>{r.label}</T>
      </NodeLabel>
    </TreeRow>
  ));

export default function App() {
  return (
    <Win>
      <GlobalStyle />
      <TitleBar>
        <Svg>
          <ellipse cx="7" cy="3.500" rx="6" ry="2.500" fill="#e8e8e8" stroke="#808080" />
          <path d="M1 3.500v9c0 1.400 2.700 2.500 6 2.500s6-1.100 6-2.500v-9" fill="#d0d0d0" stroke="#808080" />
          <path d="M1 6.500c0 1.400 2.700 2.500 6 2.500s6-1.100 6-2.500M1 9.500c0 1.400 2.700 2.500 6 2.500s6-1.100 6-2.500" fill="none" stroke="#808080" />
          <path d="m10 11 3-3 3 3-3 3z" fill="#40b040" />
        </Svg>
        <TitleText>达梦数据交换平台软件</TitleText>
        <CapBtn><Svg s={8} vb="0 0 8 8"><path d="M1 6.500h4" stroke="#000" strokeWidth="2" /></Svg></CapBtn>
        <CapBtn><Svg s={10} vb="0 0 10 10"><path d="M.5 1h9v8.500h-9z" fill="none" stroke="#000" /><path d="M0 1h10" stroke="#000" strokeWidth="2" /></Svg></CapBtn>
        <CapBtn $gap={2}><Svg s={8} vb="0 0 8 8"><path d="m.5.500 7 7M7.500.5l-7 7" stroke="#000" strokeWidth="1.500" /></Svg></CapBtn>
      </TitleBar>

      <MenuBar>
        {MENUS.map((m) => (
          <MenuItem key={m}><T>{m}</T></MenuItem>
        ))}
      </MenuBar>

      <ToolZone>
        <ToolRows>
          <ToolRow>
            <Sep />
            <Slot $ml={5}><Plug off /></Slot>
            <Slot><Plug /></Slot>
            <Sep $ml={2} />
            <TextBtn $ml={5} $gap={3}><FolderIO /><span><T>整体导入(I)...</T></span></TextBtn>
            <TextBtn $ml={10}><FolderOut /><span><T>整体导出(X)...</T></span></TextBtn>
            <Sep $ml={9} />
            <Slot $ml={2}><Light on tag="play" /></Slot>
            <Slot><Light tag="gray" /></Slot>
            <Slot><Light tag="gray" /></Slot>
            <ToolGroupEnd>
              <Sep />
              <Slot $ml={3}><Save /></Slot>
              <Slot><Save all /></Slot>
              <Sep $ml={5} />
              <Slot $ml={3}><Undo /></Slot>
              <Slot $w={22}><Undo off flip /></Slot>
              <Sep $ml={3} />
              <Slot $ml={1}><Cut /></Slot>
              <Slot><Copy /></Slot>
              <Slot><Paste /></Slot>
              <Slot><Del /></Slot>
            </ToolGroupEnd>
          </ToolRow>
          <ToolRow>
            <Sep />
            <Slot $ml={3}><Layout d={LAY.a} /></Slot>
            <Slot><Layout d={LAY.b} /></Slot>
            <Slot><Layout d={LAY.c} /></Slot>
            <Sep $ml={4} />
            <Slot $ml={2}><Layout d={LAY.d} /></Slot>
            <Slot><Layout d={LAY.e} /></Slot>
            <Slot><Layout d={LAY.f} /></Slot>
            <Slot><Layout d={LAY.g} /></Slot>
            <Slot><Layout d={LAY.h} /></Slot>
            <Sep $ml={4} />
            <Slot $ml={2}><Zoom plus /></Slot>
            <Slot><Zoom /></Slot>
            <Combo><ComboText>100%</ComboText><ComboBtn /></Combo>
            <Sep $ml={4} />
            <Slot $ml={4}><Route /></Slot>
            <Slot $ml={7}><Play /></Slot>
            <Slot><Play fast /></Slot>
            <Slot><Step /></Slot>
            <Slot><StepList /></Slot>
            <Sep $ml={3} />
            <Slot $ml={3}><DebugGray k="resume" /></Slot>
            <Slot><DebugGray k="pause" /></Slot>
            <Slot><DebugGray k="stop" /></Slot>
          </ToolRow>
        </ToolRows>
        <Switcher>
          <SwitchIcon><NewPersp /></SwitchIcon>
          <DesignBtn><DesignGrid /><span>设计</span></DesignBtn>
        </Switcher>
      </ToolZone>

      <Panels>
        <Panel $w={270}>
          <TabBar>
            <Tab $w={72} $on><Cube /><span>工</span><TabClose><XClose /></TabClose></Tab>
            <Tab $w={51}><DbServer /><span>数</span></Tab>
            <Tab $w={51}><Inbox /><span>发</span></Tab>
            <Tab $w={51}><Fx /><span>全</span></Tab>
            <TabTools><MinBtn /><MaxBtn /></TabTools>
          </TabBar>
          <PanelTools>
            <ToolSlot><Cube /></ToolSlot>
            <ToolSlot><TaskOut /></ToolSlot>
            <ToolSlot><TaskIn /></ToolSlot>
            <ToolSlot><UpArrow /></ToolSlot>
            <ToolSlot><Refresh /></ToolSlot>
            <ToolSlot><Home /></ToolSlot>
            <ToolSlot><ArrowGray /></ToolSlot>
            <ToolSlot><ArrowGray right /></ToolSlot>
            <MenuTri />
          </PanelTools>
          <TreeBody><TreeInner><Tree rows={leftTree} /></TreeInner></TreeBody>
        </Panel>

        <Panel $w={638} $blue>
          <TabBar $blue>
            <BlueTab $w={127} $gap={2} $on>
              <Trans />
              <span><T>*转换 - ceshi</T></span>
              <TabClose $mr={8}><XClose s={12} /></TabClose>
            </BlueTab>
            <TabTools $pr={5} $gap={8}><MinBtn /><MaxBtn /></TabTools>
          </TabBar>
          <Canvas>
            <EdgeSvg width="400" height="300">
              <path d="M286 107 290 190" stroke="#70d010" strokeWidth="2" fill="none" />
              <path d="m287 193 7-.5-2.500 18z" fill="#70d010" />
            </EdgeSvg>
            <FlowNode $x={235} $y={68} $h={40} $kind="in" $pad={11} $gap={1}>
              <BigTable />
              <span><T>表/视图</T></span>
              <WarnBadge><Warn /></WarnBadge>
            </FlowNode>
            <FlowNode $x={243} $y={212} $h={39} $kind="out" $pad={7} $gap={5}>
              <BigDoc />
              <span>文本文件</span>
              <WarnBadge><Warn /></WarnBadge>
            </FlowNode>
            <Marker />
            <EdgeLabel>默认输出</EdgeLabel>
          </Canvas>
        </Panel>

        <Panel $w={215}>
          <TabBar>
            <Tab $w={85} $on $gap={4} $fs={12}>
              <Toolbox />
              <span>工具箱</span>
              <TabClose $mr={7}><XClose /></TabClose>
            </Tab>
            <TabTools $pr={5} $gap={11}>
              <SideTools>
                <OpenFolder />
                <Trans />
                <Report />
              </SideTools>
              <MinBtn />
              <MaxBtn />
            </TabTools>
          </TabBar>
          <ScrollFrame>
            <RightTree><TreeInner $mt={-1} $ml={-3}><Tree rows={rightTree} /></TreeInner></RightTree>
            <VTrack>
              <ArrowBtn $dir="up" />
              <Thumb $h={136} $mt={221} />
              <ArrowBtn $dir="down" $push />
            </VTrack>
            <HTrack>
              <ArrowBtn $dir="left" />
              <Thumb $grow />
              <ArrowBtn $dir="right" />
            </HTrack>
            <Corner />
          </ScrollFrame>
        </Panel>
      </Panels>

      <StatusBar>
        <StatusCell $w={248}><T>当前站点: localhost:1234</T></StatusCell>
        <StatusCell $w={249}><T>授权用户: 试用用户 还剩90天</T></StatusCell>
        <StatusCell $w={247}><T>登录用户: admin</T></StatusCell>
        <StatusCell $w={12}>登录</StatusCell>
      </StatusBar>
      <Watermark>https://blog.csdn.net/weixin_42082084</Watermark>
    </Win>
  );
}
